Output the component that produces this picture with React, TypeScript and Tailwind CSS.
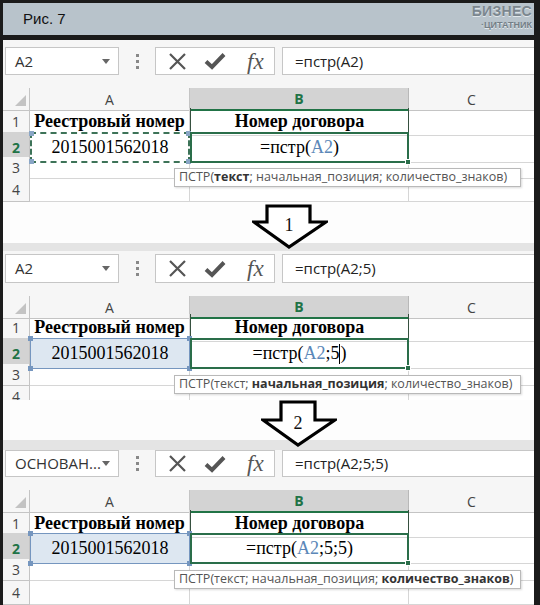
import type { ReactNode } from "react";

const serif = { fontFamily: '"Liberation Serif", "Times New Roman", serif' };
const ui = { fontFamily: '"Open Sans", "Noto Sans", sans-serif' };

const COLS = "grid grid-cols-[27px_160px_219px_1fr]";

interface SectionProps {
  name: string;
  formula: string;
  cell: ReactNode;
  tipBold: 0 | 1 | 2;
  refDashed: boolean;
  padTop: number;
  barH: number;
  headH: number;
  rows: number[];
}

function Arrow({ label, shaft, top }: { label: string; shaft: [number, number]; top: number }) {
  // top: y where the wings begin, measured from svg top
  const h = top + 27;
  return (
    <svg width="76" height={h} viewBox={`0 0 76 ${h}`}>
      <path
        d={`M${shaft[0]} 2 H${shaft[1]} V${top} H74 L37 ${h - 2} L2 ${top} H${shaft[0]} Z`}
        fill="white"
        stroke="black"
        strokeWidth="3.2"
        strokeLinejoin="miter"
      />
      <text x="37" y={top + 9} textAnchor="middle" fontSize="18" style={serif} fill="#111">
        {label}
      </text>
    </svg>
  );
}

function FormulaBar({ name, formula, h }: { name: string; formula: string; h: number }) {
  return (
    <div className="flex items-stretch pl-[2px]" style={{ height: h }}>
      <div className="w-[114px] bg-white border border-[#c6c6c6] flex items-center justify-between pl-[9px] pr-[8px]">
        <span className="text-[15px] text-[#333]" style={ui}>{name}</span>
        <svg width="8" height="5" viewBox="0 0 8 5"><path d="M0 0H8L4 5Z" fill="#666" /></svg>
      </div>
      <div className="w-[36px] flex flex-col items-center justify-center gap-[3px]">
        <span className="w-[3px] h-[3px] bg-[#888]" />
        <span className="w-[3px] h-[3px] bg-[#888]" />
        <span className="w-[3px] h-[3px] bg-[#888]" />
      </div>
      <div className="w-[120px] bg-white border border-[#c6c6c6] flex items-center pl-[12px]">
        <svg width="19" height="19" viewBox="0 0 19 19">
          <path d="M2 2L17 17M17 2L2 17" stroke="#555" strokeWidth="2.2" />
        </svg>
        <svg className="ml-[17px]" width="22" height="18" viewBox="0 0 22 18">
          <path d="M2 9.5L8 15L20 2.5" stroke="#555" strokeWidth="4" fill="none" />
        </svg>
        <span className="ml-[21px] italic text-[23px] text-[#555] leading-none" style={serif}>fx</span>
      </div>
      <div className="ml-[7px] flex-1 bg-white border border-[#c6c6c6] border-r-0 flex items-center pl-[12px]">
        <span className="text-[15px] text-[#222]" style={ui}>{formula}</span>
      </div>
    </div>
  );
}

function Handles({ color }: { color: string }) {
  const c = `absolute w-[5px] h-[5px] ${color}`;
  return (
    <>
      <span className={`${c} -left-[3px] -top-[3px]`} />
      <span className={`${c} -right-[3px] -top-[3px]`} />
      <span className={`${c} -left-[3px] -bottom-[3px]`} />
      <span className={`${c} -right-[3px] -bottom-[3px]`} />
    </>
  );
}

function Section({ name, formula, cell, tipBold, refDashed, padTop, barH, headH, rows }: SectionProps) {
  const parts = ["текст", "начальная_позиция", "количество_знаков"];
  const tipTop = headH + rows[0] + rows[1] + 11;
  return (
    <div>
      <div className="bg-[#f6f6f6] pb-[13px]" style={{ paddingTop: padTop }}>
        <FormulaBar name={name} formula={formula} h={barH} />
      </div>
      <div className="relative bg-white" style={ui}>
        <div className={COLS} style={{ height: headH }}>
          <div className="relative border-r border-b border-[#c4c4c4] bg-[#f6f6f6]">
            <svg className="absolute left-[12px] bottom-[4px]" width="11" height="11" viewBox="0 0 11 11">
              <path d="M11 0V11H0Z" fill="#c3c3c3" />
            </svg>
          </div>
          <div className="flex items-center justify-center text-[14px] text-[#444] border-r border-b border-[#c4c4c4] bg-[#f6f6f6]">A</div>
          <div className="flex items-center justify-center text-[14px] font-bold text-[#217346] bg-[#d3d3d3] border-r border-[#b8b8b8] border-b-2 border-b-[#217346]">B</div>
          <div className="flex items-center justify-center text-[14px] text-[#444] border-b border-[#c4c4c4] bg-[#f6f6f6]">C</div>
        </div>

        {rows.map((h, i) => (
          <div key={i} className={COLS} style={{ height: h }}>
            <div
              className={`flex items-center justify-center text-[14px] border-r border-b border-[#c4c4c4] ${
                i === 1 ? "bg-[#d3d3d3] text-[#217346] font-bold" : "bg-[#f6f6f6] text-[#444]"
              }`}
            >
              {i + 1}
            </div>
            {i === 0 && (
              <>
                <div className="flex items-center justify-center text-[18px] font-bold text-black border-r border-b border-[#d6d6d6]" style={serif}>
                  Реестровый номер
                </div>
                <div className="flex items-center justify-center text-[18px] font-bold text-black border-x border-[#36503f] border-b border-b-[#d6d6d6]" style={serif}>
                  Номер договора
                </div>
                <div className="border-b border-[#d6d6d6]" />
              </>
            )}
            {i === 1 && (
              <>
                <div
                  className={`relative flex items-center justify-center text-[18px] text-black ${
                    refDashed
                      ? "border-2 border-dashed border-[#3d7358] bg-white"
                      : "border-[1.5px] border-[#7596bf] bg-[#dde7f1]"
                  }`}
                  style={serif}
                >
                  2015001562018
                  <Handles color={refDashed ? "bg-[#8aa6c6]" : "bg-[#7596bf]"} />
                </div>
                <div className="relative flex items-center justify-center text-[18px] text-black border-2 border-[#2a6e4a]" style={serif}>
                  {cell}
                  <span className="absolute -right-[4px] -bottom-[4px] w-[6px] h-[6px] bg-[#2a6e4a] border border-white" />
                </div>
                <div className="border-b border-[#d6d6d6]" />
              </>
            )}
            {i > 1 && (
              <>
                <div className="border-r border-b border-[#d6d6d6]" />
                <div className="border-r border-b border-[#d6d6d6]" />
                <div className="border-b border-[#d6d6d6]" />
              </>
            )}
          </div>
        ))}

        <div
          className="absolute left-[171px] w-[347px] h-[19px] bg-white border border-[#b9b9b9] shadow-[1px_1px_2px_rgba(0,0,0,0.15)] flex items-center px-[4px] text-[12.5px] text-[#555] whitespace-pre"
          style={{ top: tipTop }}
        >
          <span>
            ПСТР(
            <span className={tipBold === 0 ? "font-bold text-[#333]" : ""}>{parts[0]}</span>
            {"; "}
            <span className={tipBold === 1 ? "font-bold text-[#333]" : ""}>{parts[1]}</span>
            {"; "}
            <span className={tipBold === 2 ? "font-bold text-[#333]" : ""}>{parts[2]}</span>
            )
          </span>
        </div>
      </div>
    </div>
  );
}

const A2 = <span className="text-[#5b87b8]">A2</span>;

export default function App() {
  return (
    <div className="w-[540px] h-[605px] overflow-hidden bg-[#1b1b1b] pl-[3px] pr-[6px]">
      <div className="mt-[3px] h-[32px] bg-[#b8c3cb] flex items-center justify-between pl-[20px] pr-[2px]">
        <span className="text-[15px] text-[#111]" style={{ fontFamily: '"Liberation Sans", Arial, sans-serif' }}>Рис. 7</span>
        <div className="flex flex-col items-end leading-none -mt-[5px]" style={{ fontFamily: '"Liberation Sans", Arial, sans-serif' }}>
          <span className="text-[14px] font-bold text-[#7b868e] tracking-[0.3px] [text-shadow:0_1px_0_#e2e8ec]">БИЗНЕС</span>
          <span className="mt-[3px] text-[9px] font-bold text-[#737e86] [text-shadow:0_1px_0_#e2e8ec]">·ЦИТАТНИК</span>
        </div>
      </div>
      <div className="h-[5px]" />

      <div className="bg-white">
        <Section
          name="A2"
          formula="=пстр(A2)"
          cell={<span>=пстр({A2})</span>}
          tipBold={0}
          refDashed
          padTop={7}
          barH={28}
          headH={20}
          rows={[24, 25, 21, 24]}
        />
        <div className="relative h-[41px] bg-[#fdfdfd]">
          <div className="absolute left-[249px] top-[2px] z-10">
            <Arrow label="1" shaft={[15, 58]} top={18} />
          </div>
        </div>
        <div className="h-[8px] bg-[#e4e4e4]" />

        <Section
          name="A2"
          formula="=пстр(A2;5)"
          cell={
            <span className="flex items-center">
              =пстр({A2};5<span className="inline-block w-[1px] h-[20px] bg-black" />)
            </span>
          }
          tipBold={1}
          refDashed={false}
          padTop={3}
          barH={29}
          headH={18}
          rows={[24, 26, 22, 14]}
        />
        <div className="relative h-[40px] bg-[#fdfdfd]">
          <div className="absolute left-[258px] top-[0px] z-10">
            <Arrow label="2" shaft={[20, 54]} top={20} />
          </div>
        </div>
        <div className="h-[10px] bg-[#e4e4e4]" />

        <Section
          name="ОСНОВАН..."
          formula="=пстр(A2;5;5)"
          cell={<span>=пстр({A2};5;5)</span>}
          tipBold={2}
          refDashed={false}
          padTop={0}
          barH={27}
          headH={20}
          rows={[23, 26, 22, 24]}
        />
      </div>
    </div>
  );
}
